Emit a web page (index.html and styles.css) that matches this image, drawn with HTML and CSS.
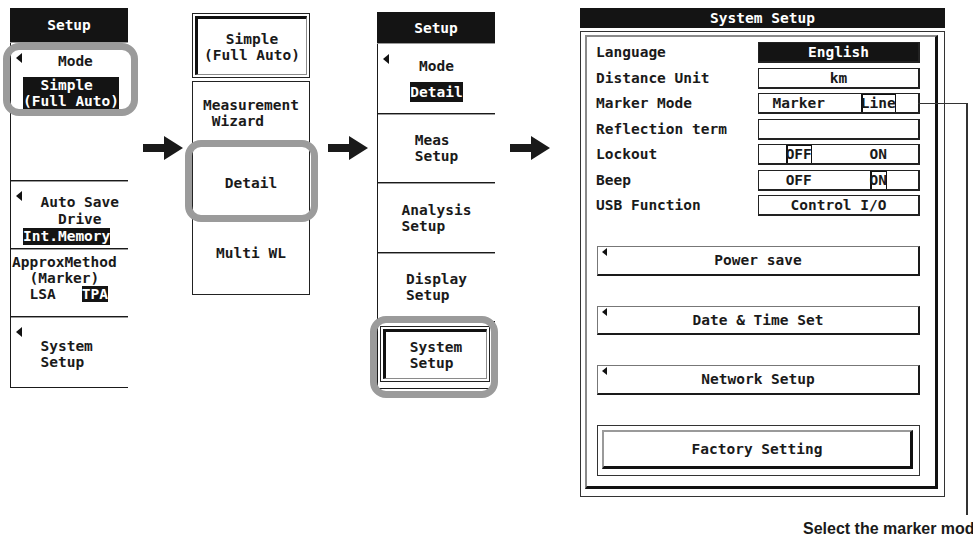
FILE: index.html
```html
<!DOCTYPE html>
<html lang="en">
<head>
    <meta charset="UTF-8">
    <title>System Setup</title>
    <link rel="stylesheet" href="styles.css">
</head>
<body>
<div class="page">

    <div class="menu menu-setup">
        <div class="menu-title">Setup</div>
        <div class="key key-mode">
            <span class="tri"></span>
            <div class="key-text">    Mode</div>
            <div class="key-value"><span class="inv">  Simple
(Full Auto)</span></div>
            <div class="ring ring-mode"></div>
        </div>
        <div class="key key-save">
            <span class="tri"></span>
            <div class="key-text">  Auto Save
    Drive
<span class="inv">Int.Memory</span></div>
        </div>
        <div class="key key-approx">
            <div class="key-text">ApproxMethod
  (Marker)
  LSA   <span class="inv">TPA</span></div>
        </div>
        <div class="key key-system">
            <span class="tri"></span>
            <div class="key-text">  System
  Setup</div>
        </div>
    </div>

    <svg class="flow-arrow" width="40" height="24" viewBox="0 0 40 24"><path d="M0 8H21V0L40 12L21 24V16H0Z" fill="#1a1a1a"/></svg>

    <div class="menu menu-mode">
        <div class="pressed pressed-simple"><div class="pressed-face">Simple
(Full Auto)</div></div>
        <div class="choice-list">
            <div class="choice choice-wizard"><span class="block">Measurement
 Wizard</span></div>
            <div class="choice choice-detail">Detail<div class="ring ring-detail"></div></div>
            <div class="choice choice-multi">Multi WL</div>
        </div>
    </div>

    <svg class="flow-arrow arrow-2" width="40" height="24" viewBox="0 0 40 24"><path d="M0 8H21V0L40 12L21 24V16H0Z" fill="#1a1a1a"/></svg>

    <div class="menu menu-detail">
        <div class="menu-title title-detail">Setup</div>
        <div class="key key-detail">
            <span class="tri"></span>
            <div class="center-text">Mode</div>
            <div class="center-text"><span class="inv inv-tall">Detail</span></div>
        </div>
        <div class="key key-center"><span class="block">Meas
Setup</span></div>
        <div class="key key-center key-analysis"><span class="block">Analysis
Setup</span></div>
        <div class="key key-center"><span class="block">Display
Setup</span></div>
        <div class="key key-last">
            <div class="pressed pressed-system"><div class="pressed-face"><span class="block">System
Setup</span></div></div>
            <div class="ring ring-system"></div>
        </div>
    </div>

    <svg class="flow-arrow arrow-3" width="40" height="24" viewBox="0 0 40 24"><path d="M0 8H21V0L40 12L21 24V16H0Z" fill="#1a1a1a"/></svg>

    <div class="dialog-col">
        <div class="dlg-title">System Setup</div>
        <div class="dlg-frame">
            <div class="dlg-inner">
                <div class="settings">
                    <div class="label">Language</div>
                    <div class="box box-dark">English</div>

                    <div class="label">Distance Unit</div>
                    <div class="box">km</div>

                    <div class="label">Marker Mode</div>
                    <div class="box box-split">
                        <span class="opt">Marker</span>
                        <span class="opt"><span class="sel">Line</span></span>
                        <div class="pointer"></div>
                    </div>

                    <div class="label">Reflection term</div>
                    <div class="box"></div>

                    <div class="label">Lockout</div>
                    <div class="box box-split">
                        <span class="opt"><span class="sel">OFF</span></span>
                        <span class="opt">ON</span>
                    </div>

                    <div class="label">Beep</div>
                    <div class="box box-split">
                        <span class="opt">OFF</span>
                        <span class="opt"><span class="sel">ON</span></span>
                    </div>

                    <div class="label">USB Function</div>
                    <div class="box">Control I/O</div>
                </div>

                <div class="dlg-btn"><span class="tri tri-small"></span>Power save</div>
                <div class="dlg-btn"><span class="tri tri-small"></span>Date &amp; Time Set</div>
                <div class="dlg-btn"><span class="tri tri-small"></span>Network Setup</div>
                <div class="factory"><div class="factory-face">Factory Setting</div></div>
            </div>
        </div>
        <div class="note">Select the marker mode.</div>
    </div>

</div>
</body>
</html>
```

FILE: styles.css
```css
* {
    box-sizing: border-box;
}

body {
    margin: 0;
    width: 973px;
    height: 538px;
    overflow: hidden;
    background: #fff;
    color: #1a1a1a;
    font-family: "DejaVu Sans Mono", monospace;
    font-weight: bold;
    font-size: 14.5px;
}

.page {
    display: flex;
    align-items: flex-start;
    padding-left: 10px;
}

/* soft key menus */

.menu {
    width: 118px;
    flex: none;
}

.menu-setup {
    margin-top: 8px;
}

.menu-title {
    height: 35px;
    line-height: 35px;
    background: #141414;
    color: #fff;
    text-align: center;
    border-bottom: 1px solid #9a9a9a;
}

.key {
    position: relative;
    border-left: 1px solid #1a1a1a;
    border-top: 1px solid #1a1a1a;
    box-shadow: inset 0 1px 0 #9a9a9a;
}

.key-text {
    white-space: pre;
    padding-left: 12px;
}

.inv {
    display: inline-block;
    background: #141414;
    color: #fff;
    white-space: pre;
}

.tri {
    position: absolute;
    left: 5px;
    top: 10px;
    width: 0;
    height: 0;
    border-top: 5px solid transparent;
    border-bottom: 5px solid transparent;
    border-right: 6px solid #111;
}

.key-mode {
    height: 137px;
    border-top: none;
    box-shadow: none;
    padding-top: 10px;
    line-height: 16px;
}

.key-mode .key-value {
    margin-top: 8px;
    padding-left: 12px;
    line-height: 16px;
}

.key-save {
    height: 68px;
    padding-top: 13px;
    line-height: 17px;
}

.key-approx {
    height: 68px;
    padding-top: 5px;
    line-height: 16px;
}

.key-approx .key-text {
    padding-left: 1px;
}

.key-system {
    height: 72px;
    padding-top: 21px;
    line-height: 16px;
    border-bottom: 1px solid #1a1a1a;
}

.ring {
    position: absolute;
    border: 7px solid #9b9b9b;
    border-radius: 16px;
    pointer-events: none;
}

.ring-mode {
    left: -8px;
    top: 0;
    width: 135px;
    height: 73px;
}

/* second menu */

.flow-arrow {
    flex: none;
    margin: 136px 0 0 15px;
}

.menu-mode {
    margin: 13px 0 0 9px;
}

.pressed {
    border: 1px solid #222;
    padding: 2px;
}

.pressed-face {
    height: 100%;
    border-style: solid;
    border-width: 3px 1px 1px 3px;
    border-color: #111 #8a8a8a #8a8a8a #111;
    display: flex;
    align-items: center;
    justify-content: center;
    text-align: center;
    white-space: pre;
    line-height: 16px;
}

.pressed-simple {
    height: 65px;
}

.choice-list {
    margin-top: 3px;
    height: 214px;
    border: 1px solid #222;
}

.choice {
    position: relative;
    display: flex;
    align-items: center;
    justify-content: center;
    line-height: 16px;
}

.choice-wizard {
    height: 62px;
}

.choice-detail {
    height: 78px;
}

.choice-multi {
    height: 62px;
}

.block {
    display: inline-block;
    white-space: pre;
    text-align: left;
    line-height: 16px;
}

.ring-detail {
    left: -8px;
    top: -4px;
    width: 133px;
    height: 82px;
}

/* third menu */

.arrow-2 {
    margin-left: 18px;
}

.menu-detail {
    margin: 12px 0 0 9px;
}

.title-detail {
    height: 32px;
    line-height: 32px;
}

.key-detail {
    height: 69px;
    border-top: none;
    box-shadow: none;
    padding-top: 14px;
    line-height: 16px;
}

.center-text {
    text-align: center;
}

.inv-tall {
    margin-top: 8px;
    line-height: 20px;
}

.key-center {
    height: 69px;
    display: flex;
    align-items: center;
    justify-content: center;
}

.key-analysis {
    height: 70px;
}

.key-last {
    height: 68px;
    padding: 4px 5px 0 2px;
    border-bottom: 1px solid #1a1a1a;
}

.pressed-system {
    height: 56px;
}

.ring-system {
    left: -8px;
    top: -6px;
    width: 128px;
    height: 82px;
}

/* system setup dialog */

.arrow-3 {
    margin-left: 15px;
}

.dialog-col {
    flex: none;
    width: 365px;
    margin: 8px 0 0 30px;
}

.dlg-title {
    height: 20px;
    line-height: 20px;
    background: #141414;
    color: #fff;
    text-align: center;
}

.dlg-frame {
    margin-top: 3px;
    height: 466px;
    border: 1px solid #333;
    border-right-width: 1px;
    padding: 3px 6px 7px 4px;
}

.dlg-inner {
    height: 100%;
    border-style: solid;
    border-width: 2px 3px 3px 2px;
    border-color: #8a8a8a #111 #111 #8a8a8a;
    padding: 5px 15px 0 9px;
    display: flex;
    flex-direction: column;
}

.settings {
    display: grid;
    grid-template-columns: 1fr 162px;
    grid-auto-rows: 21px;
    row-gap: 4.5px;
    align-items: center;
}

.label {
    white-space: pre;
    line-height: 21px;
}

.box {
    position: relative;
    height: 21px;
    border: 1px solid #222;
    border-right-width: 2px;
    border-bottom-width: 2px;
    text-align: center;
    line-height: 18px;
}

.box-dark {
    background: #141414;
    color: #fff;
}

.box-split {
    display: flex;
}

.opt {
    flex: 1;
    text-align: center;
}

.sel {
    display: inline-block;
    height: 18px;
    box-shadow: inset 2px 1px 0 #111, inset -1px 0 0 #111;
}

.pointer {
    position: absolute;
    left: 100%;
    top: 9px;
    width: 50px;
    height: 412px;
    border-top: 1px solid #333;
    border-right: 2px solid #333;
}

.dlg-btn {
    position: relative;
    margin: 30px 0 0 1px;
    height: 29.5px;
    border-style: solid;
    border-width: 1px 2px 2px 1px;
    border-color: #777 #1a1a1a #1a1a1a #777;
    display: flex;
    align-items: center;
    justify-content: center;
}

.tri-small {
    left: 4px;
    top: 1px;
    border-top-width: 4px;
    border-bottom-width: 4px;
    border-right-width: 5px;
}

.factory {
    margin: 30px 0 0 1px;
    height: 51px;
    border: 1px solid #333;
    padding: 4px 6px 6px 4px;
}

.factory-face {
    height: 100%;
    border-style: solid;
    border-width: 2px 3px 3px 2px;
    border-color: #9a9a9a #111 #111 #9a9a9a;
    display: flex;
    align-items: center;
    justify-content: center;
}

.note {
    margin: 23px 0 0 223px;
    white-space: nowrap;
    font-family: "Liberation Sans", Arial, sans-serif;
    font-size: 16px;
    line-height: 18px;
    color: #1a1a1a;
}
```
